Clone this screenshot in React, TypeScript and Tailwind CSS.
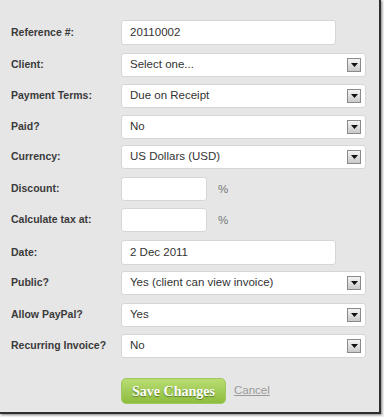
import React from "react";

type Row = {
    label: string;
    kind: "text" | "select" | "percent";
    value?: string;
    width?: string;
    top: string;
};

const rows: Row[] = [
    { label: "Reference #:", kind: "text", value: "20110002", width: "w-[215px]", top: "mt-[20px]" },
    { label: "Client:", kind: "select", value: "Select one...", top: "mt-[8px]" },
    { label: "Payment Terms:", kind: "select", value: "Due on Receipt", top: "mt-[7px]" },
    { label: "Paid?", kind: "select", value: "No", top: "mt-[7px]" },
    { label: "Currency:", kind: "select", value: "US Dollars (USD)", top: "mt-[6px]" },
    { label: "Discount:", kind: "percent", top: "mt-[8px]" },
    { label: "Calculate tax at:", kind: "percent", top: "mt-[7px]" },
    { label: "Date:", kind: "text", value: "2 Dec 2011", width: "w-[215px]", top: "mt-[8px]" },
    { label: "Public?", kind: "select", value: "Yes (client can view invoice)", top: "mt-[6px]" },
    { label: "Allow PayPal?", kind: "select", value: "Yes", top: "mt-[8px]" },
    { label: "Recurring Invoice?", kind: "select", value: "No", top: "mt-[7px]" },
];

function SelectArrow() {
    return (
        <span className="flex h-[14px] w-[14px] items-center justify-center border border-[#8a8a8a] bg-gradient-to-b from-[#f4f4f4] to-[#c9c9c9]">
            <svg width="7" height="4" viewBox="0 0 7 4">
                <path d="M0 0 H7 L3.5 4 Z" fill="#111" />
            </svg>
        </span>
    );
}

function Field({ row }: { row: Row }) {
    const box = "flex h-[24px] items-center rounded-[3px] border border-[#d6d6d6] bg-white pl-[8px] text-[11.5px] text-[#333]";
    if (row.kind === "select") {
        return (
            <div className={`${box} w-[245px] justify-between pr-[4px]`}>
                <span>{row.value}</span>
                <SelectArrow />
            </div>
        );
    }
    if (row.kind === "percent") {
        return (
            <div className="flex items-center">
                <div className={`${box} w-[86px]`} />
                <span className="ml-[11px] mt-[2px] text-[11.5px] text-[#777]">%</span>
            </div>
        );
    }
    return <div className={`${box} ${row.width} h-[25px]`}>{row.value}</div>;
}

export default function App() {
    return (
        <div className="h-[417px] w-[384px] bg-[#f2f2f2]" style={{ fontFamily: '"Liberation Sans", Arial, sans-serif' }}>
            <div className="flex h-[414px] w-[381px] flex-col border-b-2 border-r-2 border-[#2e2e2e] bg-[#e6e6e6] shadow-[1px_1px_2px_rgba(0,0,0,0.45)]">
                {rows.map((row) => (
                    <div key={row.label} className={`flex items-center ${row.top}`}>
                        <label className="w-[121px] shrink-0 pl-[11px] text-[10.5px] font-bold text-[#3a3a3a]">
                            {row.label}
                        </label>
                        <Field row={row} />
                    </div>
                ))}

                <div className="mt-[20px] flex items-center pl-[121px]">
                    <button
                        className="h-[26px] w-[105px] rounded-[5px] border border-[#9fc95e] bg-gradient-to-b from-[#b9dc72] to-[#8dbd3d] text-[14px] font-bold text-white [text-shadow:0_1px_1px_rgba(60,90,20,0.7)]"
                        style={{ fontFamily: '"Liberation Serif", "Times New Roman", serif' }}
                    >
                        Save Changes
                    </button>
                    <a className="ml-[8px] text-[11.5px] text-[#9a9a9a] underline">Cancel</a>
                </div>
            </div>
        </div>
    );
}
